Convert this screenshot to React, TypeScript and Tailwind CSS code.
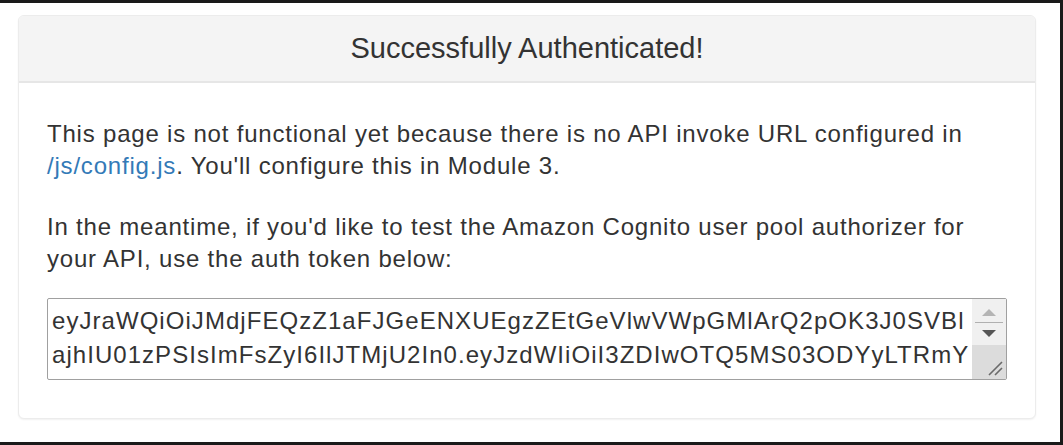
import React from "react";

const token = [
    "eyJraWQiOiJMdjFEQzZ1aFJGeENXUEgzZEtGeVlwVWpGMlArQ2pOK3J0SVBl",
    "ajhIU01zPSIsImFsZyI6IlJTMjU2In0.eyJzdWIiOiI3ZDIwOTQ5MS03ODYyLTRmY",
];

const Scrollbar: React.FC = () => (
    <div className="flex w-[34px] shrink-0 flex-col">
        <div className="flex h-[46px] flex-col items-center bg-[#f0f0f0] pt-[9px]">
            <svg width="16" height="9" viewBox="0 0 16 9">
                <path d="M1 8 L8 1 L15 8 Z" fill="#b4b4b4" />
            </svg>
            <div className="mt-[5px] h-px w-[28px] bg-[#b0b0b0]" />
            <svg className="mt-[6px]" width="16" height="9" viewBox="0 0 16 9">
                <path d="M1 1 L15 1 L8 8 Z" fill="#555555" />
            </svg>
        </div>
        <div className="relative flex-1 bg-[#dcdcdc]">
            <svg className="absolute right-[3px] bottom-[3px]" width="16" height="16" viewBox="0 0 16 16">
                <path d="M2 15 L15 2 M8 15 L15 8" stroke="#6a6a6a" strokeWidth="1.6" fill="none" />
            </svg>
        </div>
    </div>
);

export default function App() {
    return (
        <div
            className="h-[445px] w-[1063px] border-y-[3px] border-r-[3px] border-[#1a1a1a] bg-white pt-[12px] pr-[24px] pl-[18px] text-[#333333]"
            style={{ fontFamily: '"Liberation Sans", Arial, sans-serif' }}
        >
            <div className="overflow-hidden rounded-[6px] border border-[#ececec] bg-white shadow-[0_1px_2px_rgba(0,0,0,0.06)]">
                <div className="flex h-[67px] items-center justify-center border-b-2 border-[#e6e6e6] bg-[#f4f4f4]">
                    <h3 className="text-[29px] leading-none">Successfully Authenticated!</h3>
                </div>
                <div className="px-[28px] pt-[35px] pb-[38px] text-[24px] leading-[32px] tracking-[0.8px]">
                    <p className="mb-[29px]">
                        This page is not functional yet because there is no API invoke URL configured in{" "}
                        <a href="#" className="text-[#337ab7]">
                            /js/config.js
                        </a>
                        . You'll configure this in Module 3.
                    </p>
                    <p className="mb-[23px]">
                        In the meantime, if you'd like to test the Amazon Cognito user pool authorizer for your
                        API, use the auth token below:
                    </p>
                    <div className="flex h-[82px] rounded-[2px] border border-[#a0a0a0] bg-white">
                        <div className="flex-1 overflow-hidden pt-[5px] pl-[4px] leading-[34px] tracking-[1.05px]">
                            {token.map((line) => (
                                <div key={line} className="overflow-hidden whitespace-nowrap">
                                    {line}
                                </div>
                            ))}
                        </div>
                        <Scrollbar />
                    </div>
                </div>
            </div>
        </div>
    );
}
